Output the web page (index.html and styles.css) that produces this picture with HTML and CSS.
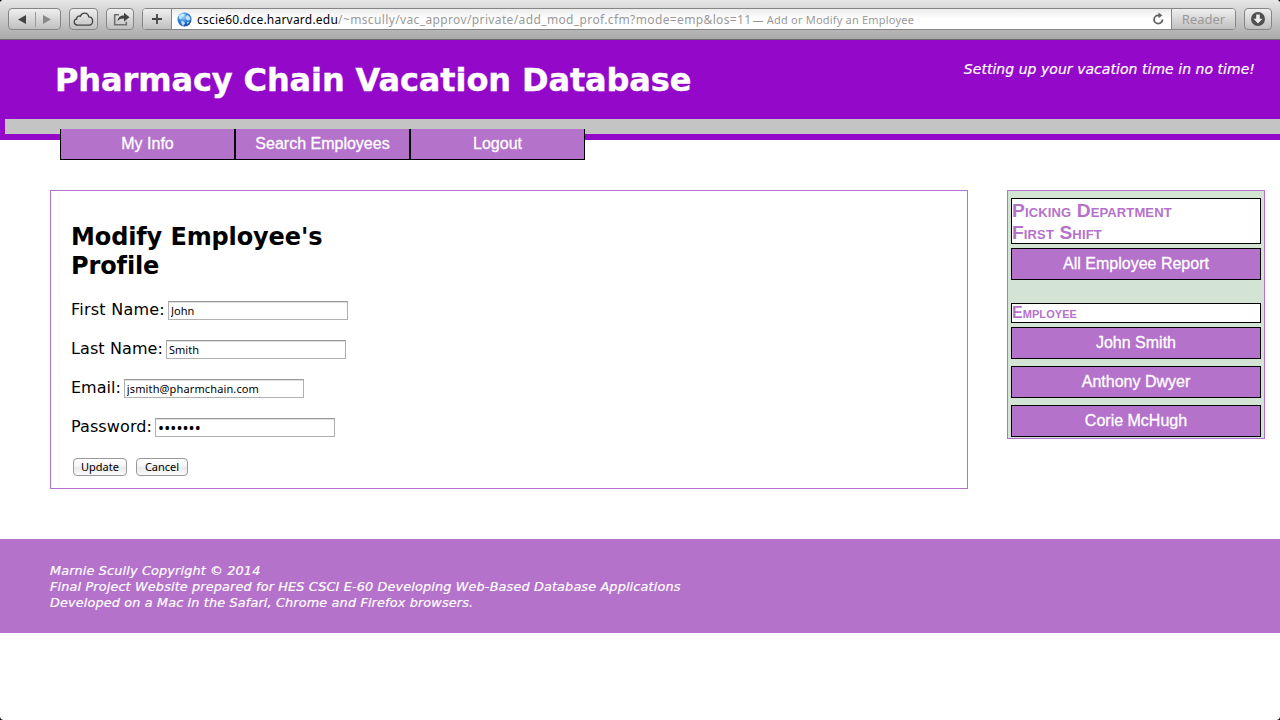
FILE: index.html
```html
<!DOCTYPE html>
<html lang="en">
<head>
<meta charset="utf-8">
<title>Add or Modify an Employee</title>
<link rel="stylesheet" href="styles.css">
</head>
<body>
<div class="window">
<div class="toolbar">
  <div class="tool nav-buttons">
    <svg width="52" height="20" viewBox="0 0 52 20"><path d="M17 6v9l-8-4.500z" fill="#444"/><path d="M34 6v9l8-4.500z" fill="#888"/><path d="M26.500 3v15" stroke="#999"/></svg>
  </div>
  <div class="tool cloud"><svg width="28" height="20" viewBox="0 0 28 20"><path d="M8 16.200c-4.600 0-5-5.700-1.300-6.200C6.500 7.500 9 6.500 10.400 7.300 11.700 2.800 18 3 18.800 7.900c5 .2 5.200 8.300.2 8.300z" fill="none" stroke="#444" stroke-width="1.300"/></svg></div>
  <div class="tool share"><svg width="27" height="20" viewBox="0 0 27 20"><path d="M12 5.800H7.700v9.900h11.600v-3" fill="none" stroke="#707070" stroke-width="1.600"/><path d="M10.500 12c.5-3.700 3-5.500 6.500-5.500V3.800l5.500 4.400-5.500 4.200V9.500c-3 0-5 .8-6.500 2.500z" fill="#444"/></svg></div>
  <div class="address">
    <div class="plus"><svg width="30" height="20" viewBox="0 0 30 20"><path d="M14 5v10M9 10h10" stroke="#444" stroke-width="1.800"/></svg></div>
    <svg class="globe" width="15" height="15" viewBox="0 0 15 15"><defs><radialGradient id="sea" cx=".4" cy=".3" r=".75"><stop offset="0" stop-color="#9bd5ff"/><stop offset=".5" stop-color="#2f86e0"/><stop offset="1" stop-color="#123f96"/></radialGradient></defs><circle cx="7.500" cy="7.500" r="7" fill="url(#sea)"/><path d="M2 3.500l3-2 3 .8-1 2-2 .7-1 2.500-2-1zM8.500 5l2-2 2.500 2 .5 3-2.500.5L9 7.500zM4 9l3 .5 1 2-2 2.500-1.500-2zM10 10l2.500-.5-2 3z" fill="#d5efff" opacity=".85"/></svg>
    <span class="host">cscie60.dce.harvard.edu</span><span class="path">/~mscully/vac_approv/private/add_mod_prof.cfm?mode=emp&amp;los=11</span><span class="page-title">— Add or Modify an Employee</span>
    <svg class="reload" width="13" height="14" viewBox="0 0 13 14"><path d="M10.500 7.500a4.200 4.200 0 1 1-4.200-4.200H8" fill="none" stroke="#606060" stroke-width="1.800"/><path d="M6.500 .5l4 2.900-4 2.700z" fill="#606060"/></svg>
    <div class="reader">Reader</div>
  </div>
  <div class="tool download"><svg width="26" height="20" viewBox="0 0 26 20"><circle cx="13" cy="10" r="7" fill="#505050"/><path d="M11.200 5.500h3.600v4.200h2.700L13 14.500 8.500 9.700h2.700z" fill="#eee"/></svg></div>
</div>
<header class="header">
  <div class="banner"><h1>Pharmacy Chain Vacation Database</h1><em class="tagline">Setting up your vacation time in no time!</em></div>
  <div class="stripe"></div>
</header>
<nav class="tabs"><a>My Info</a><a>Search Employees</a><a>Logout</a></nav>
<main class="content">
  <form class="profile">
    <h2>Modify Employee's<br>Profile</h2>
    <div class="field first"><label for="first">First Name:</label><input id="first" value="John"></div>
    <div class="field last"><label for="last">Last Name:</label><input id="last" value="Smith"></div>
    <div class="field email"><label for="email">Email:</label><input id="email" value="jsmith@pharmchain.com"></div>
    <div class="field password"><label for="password">Password:</label><input id="password" type="password" value="1234567"></div>
    <div class="actions"><button type="button">Update</button><button type="button" class="cancel">Cancel</button></div>
  </form>
  <aside class="sidebar">
    <h3>Picking Department<br>First Shift</h3>
    <a class="report">All Employee Report</a>
    <h4>Employee</h4>
    <a>John Smith</a><a>Anthony Dwyer</a><a>Corie McHugh</a>
  </aside>
</main>
<footer class="footer">Marnie Scully Copyright © 2014<br>Final Project Website prepared for HES CSCI E-60 Developing Web-Based Database Applications<br>Developed on a Mac in the Safari, Chrome and Firefox browsers.</footer>
</div>
</body>
</html>
```
FILE: styles.css
```css
* { box-sizing: border-box; }
body { margin: 0; background: #000; font: 16px/20px "DejaVu Sans", Verdana, sans-serif; color: #000; overflow: hidden; }
svg { display: block; flex: none; }
.window { height: 720px; background: #fff; border-radius: 4px; overflow: hidden; }
.toolbar { height: 40px; display: flex; align-items: flex-start; padding: 8px 8px 0; background: linear-gradient(#e6e6e6, #c8c8c8 50%, #a8a8a8); border-bottom: 1px solid #696969; font-family: "Noto Sans", sans-serif; }
.tool { height: 22px; border: 1px solid #858585; border-radius: 4px; background: linear-gradient(#efefef, #c0c0c0); display: flex; align-items: center; justify-content: center; overflow: hidden; }
.nav-buttons { width: 53px; margin-right: 8px; }
.cloud { width: 29px; margin-right: 8px; }
.share { width: 28px; margin-right: 8px; }
.address { width: 1094px; height: 22px; border: 1px solid #858585; border-radius: 4px; background: linear-gradient(#ececec, #fff 50%); display: flex; align-items: center; overflow: hidden; white-space: nowrap; font-size: 12px; }
.plus { width: 29px; height: 20px; border-right: 1px solid #858585; background: linear-gradient(#efefef, #c0c0c0); flex: none; }
.globe { margin: 0 5px; }
.host { letter-spacing: 0.22px; padding-top: 1px; }
.path { color: #999; letter-spacing: 0.37px; padding-top: 1px; }
.page-title { color: #999; font-size: 11px; letter-spacing: 0.2px; padding: 2px 0 0 1px; }
.reload { margin-left: auto; margin-right: 6px; }
.reader { width: 64px; height: 20px; border-left: 1px solid #858585; background: linear-gradient(#efefef, #c0c0c0); color: #999; font-size: 13px; text-align: center; flex: none; }
.download { width: 28px; margin-left: 8px; }
.header { height: 100px; background: #9409c9; color: #fff; }
.banner { height: 79px; padding: 0 25px 0 55px; display: flex; justify-content: space-between; }
h1 { margin: 0; font-size: 32px; line-height: 81px; letter-spacing: -0.11px; -webkit-text-stroke: 0.4px #fff; }
.tagline { font-size: 14px; line-height: 58px; letter-spacing: 0.04px; -webkit-text-stroke: 0.2px #fff; }
.stripe { height: 15px; margin-left: 5px; background: #c4c4c4; }
.tabs { display: flex; margin: -11px 0 0 60px; position: relative; font-family: "Liberation Sans", Helvetica, sans-serif; color: #fff; -webkit-text-stroke: 0.3px #fff; }
.tabs a { width: 175px; height: 31px; line-height: 29px; border: 1px solid #000; border-top: 0; background: #b472cb; text-align: center; }
.content { display: flex; justify-content: space-between; align-items: flex-start; padding: 30px 15px 0 50px; height: 379px; }
.profile { width: 918px; height: 299px; border: 1px solid #b472cb; padding: 32px 20px 0; }
h2 { margin: 0 0 18px; font-size: 24px; line-height: 29px; letter-spacing: -0.12px; }
.field { display: flex; height: 39px; line-height: 21px; }
.field input { width: 180px; height: 19px; margin: 2px 0 0 3px; border: 1px solid #b0b0b0; border-top-color: #989898; padding: 0 2px; box-shadow: inset 0 1px 1px #ddd; font: 11px "Noto Sans", sans-serif; }
.first { letter-spacing: 0.24px; }
.last { letter-spacing: 0.1px; }
.password { letter-spacing: 0.1px; }
.email input { letter-spacing: 0.13px; }
.password input { font-size: 16px; letter-spacing: 0.1px; }
.actions { display: flex; gap: 9px; padding: 3px 0 0 2px; }
.actions button { height: 18px; border: 1px solid #999; border-radius: 4px; background: linear-gradient(#fff, #f4f4f4 50%, #e8e8e8 51%, #fbfbfb); font: 11px/15px "Noto Sans", sans-serif; color: #000; width: 54px; padding: 0 0 1px; }
.actions .cancel { width: 52px; }
.sidebar { width: 258px; height: 249px; border: 1px solid #b472cb; background: #d3e3d4; padding: 7px 3px 0; font-family: "Liberation Sans", Helvetica, sans-serif; }
.sidebar a { display: block; height: 32px; border: 1px solid #000; background: #b472cb; color: #fff; text-align: center; line-height: 30px; margin-bottom: 7px; -webkit-text-stroke: 0.3px #fff; }
.sidebar h3, .sidebar h4 { margin: 0 0 4px; background: #fff; border: 1px solid #000; color: #b472cb; font-variant: small-caps; }
.sidebar h3 { height: 46px; font-size: 19.2px; line-height: 22px; letter-spacing: 0.13px; padding-top: 1px; }
.sidebar h4 { height: 20px; font-size: 16px; line-height: 18px; letter-spacing: 0.06px; }
.sidebar .report { margin-bottom: 23px; }
.footer { height: 94px; background: #b472cb; color: #fff; font-style: italic; font-size: 12.8px; line-height: 16px; letter-spacing: 0.155px; padding: 24px 50px 0; -webkit-text-stroke: 0.2px #fff; }
```
